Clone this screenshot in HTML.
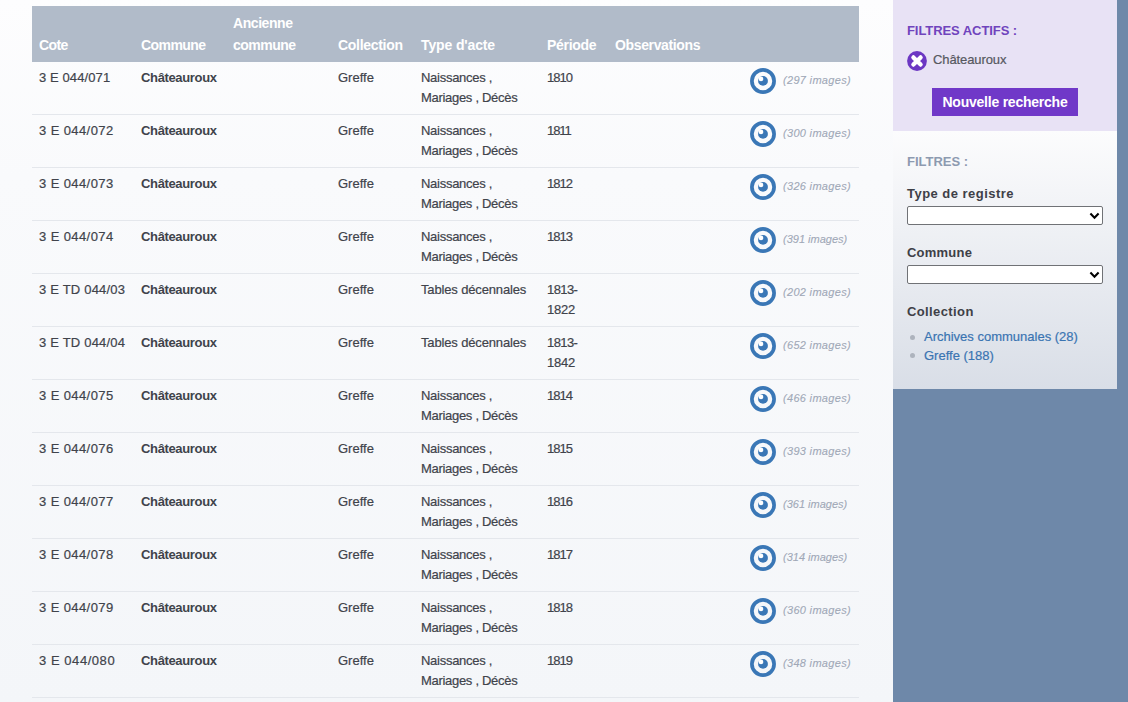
<!DOCTYPE html>
<html><head><meta charset="utf-8">
<style>
*{margin:0;padding:0;box-sizing:border-box}
html,body{width:1128px;height:702px;overflow:hidden}
body{position:relative;font-family:"Liberation Sans",sans-serif;font-size:13px;line-height:20px;color:#40434b;
background:linear-gradient(180deg,#fdfdfe 0%,#f9fafc 25%,#f4f6f9 100%);}
.t{position:absolute;white-space:nowrap;height:20px;-webkit-text-stroke:0.2px currentColor}
.b{font-weight:bold;-webkit-text-stroke:0}
.hd{position:absolute;left:32px;top:6px;width:827px;height:56px;background:#b1bbc9}
.h{color:#fff;font-weight:bold;font-size:14px;-webkit-text-stroke:0}
.ln{position:absolute;left:32px;width:827px;height:1px;background:#e4e7ec}
.eye{position:absolute}
.im{font-style:italic;font-size:11px;color:#a0a8b7;-webkit-text-stroke:0.1px currentColor}
.steel{position:absolute;left:893px;top:0;width:235px;height:702px;background:#6e88a9}
.act{position:absolute;left:893px;top:0;width:224px;height:131px;background:#e8e2f5}
.flt{position:absolute;left:893px;top:131px;width:224px;height:258px;background:linear-gradient(180deg,#fcfcfd 0%,#d9dee7 100%)}
.btn{position:absolute;left:932px;top:88px;width:146px;height:28px;background:#7038c8;color:#fff;font-weight:bold;font-size:14px;line-height:28px;text-align:center;letter-spacing:-0.23px}
.sel{position:absolute;left:907px;width:196px;height:19px;background:#fff;border:1px solid #707276;border-radius:2px}
.lk{color:#3a74b2}
.bul{position:absolute;width:5px;height:5px;border-radius:50%;background:#adb3bd}
</style></head><body>
<div class="hd"></div>
<div class="t h" style="left:39px;top:34.9px;letter-spacing:-0.6px">Cote</div>
<div class="t h" style="left:141px;top:34.9px;letter-spacing:-0.55px">Commune</div>
<div class="t h" style="left:233px;top:13.2px;letter-spacing:-0.43px">Ancienne</div>
<div class="t h" style="left:233px;top:34.9px;letter-spacing:-0.5px">commune</div>
<div class="t h" style="left:338px;top:34.9px;letter-spacing:-0.3px">Collection</div>
<div class="t h" style="left:421px;top:34.9px;letter-spacing:-0.13px">Type d'acte</div>
<div class="t h" style="left:547px;top:34.9px;letter-spacing:-0.3px">Période</div>
<div class="t h" style="left:615px;top:34.9px;letter-spacing:-0.36px">Observations</div>
<div class="t " style="left:39px;top:67.5px;letter-spacing:0.1px">3 E 044/071</div><div class="t b" style="left:141px;top:67.5px;letter-spacing:-0.35px">Châteauroux</div><div class="t " style="left:338px;top:67.5px">Greffe</div><div class="t " style="left:421px;top:67.5px;letter-spacing:-0.27px">Naissances ,</div><div class="t " style="left:421px;top:87.5px;letter-spacing:-0.3px">Mariages , Décès</div><div class="t " style="left:547px;top:67.5px;letter-spacing:-1px">1810</div><svg class="eye" style="left:750px;top:68px" width="26" height="26" viewBox="0 0 26 26"><circle cx="13" cy="13" r="11.1" fill="none" stroke="#3a77b6" stroke-width="3.7"/><circle cx="13" cy="12.9" r="4.9" fill="#3a77b6"/><circle cx="11" cy="10.9" r="2.3" fill="#fff"/></svg><div class="t im" style="left:783px;top:70.1px;letter-spacing:0.31px">(297 images)</div><div class="ln" style="top:114px"></div><div class="t " style="left:39px;top:120.5px;letter-spacing:0.4px">3 E 044/072</div><div class="t b" style="left:141px;top:120.5px;letter-spacing:-0.35px">Châteauroux</div><div class="t " style="left:338px;top:120.5px">Greffe</div><div class="t " style="left:421px;top:120.5px;letter-spacing:-0.27px">Naissances ,</div><div class="t " style="left:421px;top:140.5px;letter-spacing:-0.3px">Mariages , Décès</div><div class="t " style="left:547px;top:120.5px;letter-spacing:-1.1px">1811</div><svg class="eye" style="left:750px;top:121px" width="26" height="26" viewBox="0 0 26 26"><circle cx="13" cy="13" r="11.1" fill="none" stroke="#3a77b6" stroke-width="3.7"/><circle cx="13" cy="12.9" r="4.9" fill="#3a77b6"/><circle cx="11" cy="10.9" r="2.3" fill="#fff"/></svg><div class="t im" style="left:783px;top:123.1px;letter-spacing:0.31px">(300 images)</div><div class="ln" style="top:167px"></div><div class="t " style="left:39px;top:173.5px;letter-spacing:0.4px">3 E 044/073</div><div class="t b" style="left:141px;top:173.5px;letter-spacing:-0.35px">Châteauroux</div><div class="t " style="left:338px;top:173.5px">Greffe</div><div class="t " style="left:421px;top:173.5px;letter-spacing:-0.27px">Naissances ,</div><div class="t " style="left:421px;top:193.5px;letter-spacing:-0.3px">Mariages , Décès</div><div class="t " style="left:547px;top:173.5px;letter-spacing:-1px">1812</div><svg class="eye" style="left:750px;top:174px" width="26" height="26" viewBox="0 0 26 26"><circle cx="13" cy="13" r="11.1" fill="none" stroke="#3a77b6" stroke-width="3.7"/><circle cx="13" cy="12.9" r="4.9" fill="#3a77b6"/><circle cx="11" cy="10.9" r="2.3" fill="#fff"/></svg><div class="t im" style="left:783px;top:176.1px;letter-spacing:0.31px">(326 images)</div><div class="ln" style="top:220px"></div><div class="t " style="left:39px;top:226.5px;letter-spacing:0.4px">3 E 044/074</div><div class="t b" style="left:141px;top:226.5px;letter-spacing:-0.35px">Châteauroux</div><div class="t " style="left:338px;top:226.5px">Greffe</div><div class="t " style="left:421px;top:226.5px;letter-spacing:-0.27px">Naissances ,</div><div class="t " style="left:421px;top:246.5px;letter-spacing:-0.3px">Mariages , Décès</div><div class="t " style="left:547px;top:226.5px;letter-spacing:-1px">1813</div><svg class="eye" style="left:750px;top:227px" width="26" height="26" viewBox="0 0 26 26"><circle cx="13" cy="13" r="11.1" fill="none" stroke="#3a77b6" stroke-width="3.7"/><circle cx="13" cy="12.9" r="4.9" fill="#3a77b6"/><circle cx="11" cy="10.9" r="2.3" fill="#fff"/></svg><div class="t im" style="left:783px;top:229.1px">(391 images)</div><div class="ln" style="top:273px"></div><div class="t " style="left:39px;top:279.5px;letter-spacing:0.2px">3 E TD 044/03</div><div class="t b" style="left:141px;top:279.5px;letter-spacing:-0.35px">Châteauroux</div><div class="t " style="left:338px;top:279.5px">Greffe</div><div class="t " style="left:421px;top:279.5px;letter-spacing:-0.15px">Tables décennales</div><div class="t " style="left:547px;top:279.5px;letter-spacing:-0.6px">1813-</div><div class="t " style="left:547px;top:299.5px;letter-spacing:-0.2px">1822</div><svg class="eye" style="left:750px;top:280px" width="26" height="26" viewBox="0 0 26 26"><circle cx="13" cy="13" r="11.1" fill="none" stroke="#3a77b6" stroke-width="3.7"/><circle cx="13" cy="12.9" r="4.9" fill="#3a77b6"/><circle cx="11" cy="10.9" r="2.3" fill="#fff"/></svg><div class="t im" style="left:783px;top:282.1px;letter-spacing:0.31px">(202 images)</div><div class="ln" style="top:326px"></div><div class="t " style="left:39px;top:332.5px;letter-spacing:0.2px">3 E TD 044/04</div><div class="t b" style="left:141px;top:332.5px;letter-spacing:-0.35px">Châteauroux</div><div class="t " style="left:338px;top:332.5px">Greffe</div><div class="t " style="left:421px;top:332.5px;letter-spacing:-0.15px">Tables décennales</div><div class="t " style="left:547px;top:332.5px;letter-spacing:-0.6px">1813-</div><div class="t " style="left:547px;top:352.5px;letter-spacing:-0.2px">1842</div><svg class="eye" style="left:750px;top:333px" width="26" height="26" viewBox="0 0 26 26"><circle cx="13" cy="13" r="11.1" fill="none" stroke="#3a77b6" stroke-width="3.7"/><circle cx="13" cy="12.9" r="4.9" fill="#3a77b6"/><circle cx="11" cy="10.9" r="2.3" fill="#fff"/></svg><div class="t im" style="left:783px;top:335.1px;letter-spacing:0.31px">(652 images)</div><div class="ln" style="top:379px"></div><div class="t " style="left:39px;top:385.5px;letter-spacing:0.4px">3 E 044/075</div><div class="t b" style="left:141px;top:385.5px;letter-spacing:-0.35px">Châteauroux</div><div class="t " style="left:338px;top:385.5px">Greffe</div><div class="t " style="left:421px;top:385.5px;letter-spacing:-0.27px">Naissances ,</div><div class="t " style="left:421px;top:405.5px;letter-spacing:-0.3px">Mariages , Décès</div><div class="t " style="left:547px;top:385.5px;letter-spacing:-1px">1814</div><svg class="eye" style="left:750px;top:386px" width="26" height="26" viewBox="0 0 26 26"><circle cx="13" cy="13" r="11.1" fill="none" stroke="#3a77b6" stroke-width="3.7"/><circle cx="13" cy="12.9" r="4.9" fill="#3a77b6"/><circle cx="11" cy="10.9" r="2.3" fill="#fff"/></svg><div class="t im" style="left:783px;top:388.1px;letter-spacing:0.31px">(466 images)</div><div class="ln" style="top:432px"></div><div class="t " style="left:39px;top:438.5px;letter-spacing:0.4px">3 E 044/076</div><div class="t b" style="left:141px;top:438.5px;letter-spacing:-0.35px">Châteauroux</div><div class="t " style="left:338px;top:438.5px">Greffe</div><div class="t " style="left:421px;top:438.5px;letter-spacing:-0.27px">Naissances ,</div><div class="t " style="left:421px;top:458.5px;letter-spacing:-0.3px">Mariages , Décès</div><div class="t " style="left:547px;top:438.5px;letter-spacing:-1px">1815</div><svg class="eye" style="left:750px;top:439px" width="26" height="26" viewBox="0 0 26 26"><circle cx="13" cy="13" r="11.1" fill="none" stroke="#3a77b6" stroke-width="3.7"/><circle cx="13" cy="12.9" r="4.9" fill="#3a77b6"/><circle cx="11" cy="10.9" r="2.3" fill="#fff"/></svg><div class="t im" style="left:783px;top:441.1px;letter-spacing:0.31px">(393 images)</div><div class="ln" style="top:485px"></div><div class="t " style="left:39px;top:491.5px;letter-spacing:0.4px">3 E 044/077</div><div class="t b" style="left:141px;top:491.5px;letter-spacing:-0.35px">Châteauroux</div><div class="t " style="left:338px;top:491.5px">Greffe</div><div class="t " style="left:421px;top:491.5px;letter-spacing:-0.27px">Naissances ,</div><div class="t " style="left:421px;top:511.5px;letter-spacing:-0.3px">Mariages , Décès</div><div class="t " style="left:547px;top:491.5px;letter-spacing:-1px">1816</div><svg class="eye" style="left:750px;top:492px" width="26" height="26" viewBox="0 0 26 26"><circle cx="13" cy="13" r="11.1" fill="none" stroke="#3a77b6" stroke-width="3.7"/><circle cx="13" cy="12.9" r="4.9" fill="#3a77b6"/><circle cx="11" cy="10.9" r="2.3" fill="#fff"/></svg><div class="t im" style="left:783px;top:494.1px">(361 images)</div><div class="ln" style="top:538px"></div><div class="t " style="left:39px;top:544.5px;letter-spacing:0.4px">3 E 044/078</div><div class="t b" style="left:141px;top:544.5px;letter-spacing:-0.35px">Châteauroux</div><div class="t " style="left:338px;top:544.5px">Greffe</div><div class="t " style="left:421px;top:544.5px;letter-spacing:-0.27px">Naissances ,</div><div class="t " style="left:421px;top:564.5px;letter-spacing:-0.3px">Mariages , Décès</div><div class="t " style="left:547px;top:544.5px;letter-spacing:-1px">1817</div><svg class="eye" style="left:750px;top:545px" width="26" height="26" viewBox="0 0 26 26"><circle cx="13" cy="13" r="11.1" fill="none" stroke="#3a77b6" stroke-width="3.7"/><circle cx="13" cy="12.9" r="4.9" fill="#3a77b6"/><circle cx="11" cy="10.9" r="2.3" fill="#fff"/></svg><div class="t im" style="left:783px;top:547.1px">(314 images)</div><div class="ln" style="top:591px"></div><div class="t " style="left:39px;top:597.5px;letter-spacing:0.4px">3 E 044/079</div><div class="t b" style="left:141px;top:597.5px;letter-spacing:-0.35px">Châteauroux</div><div class="t " style="left:338px;top:597.5px">Greffe</div><div class="t " style="left:421px;top:597.5px;letter-spacing:-0.27px">Naissances ,</div><div class="t " style="left:421px;top:617.5px;letter-spacing:-0.3px">Mariages , Décès</div><div class="t " style="left:547px;top:597.5px;letter-spacing:-1px">1818</div><svg class="eye" style="left:750px;top:598px" width="26" height="26" viewBox="0 0 26 26"><circle cx="13" cy="13" r="11.1" fill="none" stroke="#3a77b6" stroke-width="3.7"/><circle cx="13" cy="12.9" r="4.9" fill="#3a77b6"/><circle cx="11" cy="10.9" r="2.3" fill="#fff"/></svg><div class="t im" style="left:783px;top:600.1px;letter-spacing:0.31px">(360 images)</div><div class="ln" style="top:644px"></div><div class="t " style="left:39px;top:650.5px;letter-spacing:0.55px">3 E 044/080</div><div class="t b" style="left:141px;top:650.5px;letter-spacing:-0.35px">Châteauroux</div><div class="t " style="left:338px;top:650.5px">Greffe</div><div class="t " style="left:421px;top:650.5px;letter-spacing:-0.27px">Naissances ,</div><div class="t " style="left:421px;top:670.5px;letter-spacing:-0.3px">Mariages , Décès</div><div class="t " style="left:547px;top:650.5px;letter-spacing:-1px">1819</div><svg class="eye" style="left:750px;top:651px" width="26" height="26" viewBox="0 0 26 26"><circle cx="13" cy="13" r="11.1" fill="none" stroke="#3a77b6" stroke-width="3.7"/><circle cx="13" cy="12.9" r="4.9" fill="#3a77b6"/><circle cx="11" cy="10.9" r="2.3" fill="#fff"/></svg><div class="t im" style="left:783px;top:653.1px;letter-spacing:0.31px">(348 images)</div><div class="ln" style="top:697px"></div>
<div class="steel"></div>
<div class="act"></div>
<div class="flt"></div>
<div class="t b" style="left:907px;top:20.799999999999997px;letter-spacing:-0.07px;color:#7044bd">FILTRES ACTIFS :</div>
<svg style="position:absolute;left:907px;top:51px" width="20" height="20" viewBox="0 0 20 20"><circle cx="10" cy="10" r="9.9" fill="#6c37c3"/><path d="M6.4 6.4L13.6 13.6M13.6 6.4L6.4 13.6" stroke="#fff" stroke-width="4.3" stroke-linecap="round"/></svg>
<div class="t " style="left:933px;top:50.0px;letter-spacing:-0.1px;color:#56585f">Châteauroux</div>
<div class="btn">Nouvelle recherche</div>
<div class="t b" style="left:907px;top:151.8px;color:#8d9ab0">FILTRES :</div>
<div class="t b" style="left:907px;top:183.8px;letter-spacing:0.47px;color:#3e4047">Type de registre</div>
<div class="sel" style="top:206px"><svg style="position:absolute;left:181px;top:5px" width="11" height="8" viewBox="0 0 11 8"><path d="M1.4 1.6L5.5 5.7L9.6 1.6" fill="none" stroke="#000" stroke-width="2.1"/></svg></div>
<div class="t b" style="left:907px;top:243.10000000000002px;letter-spacing:0.23px;color:#3e4047">Commune</div>
<div class="sel" style="top:265px"><svg style="position:absolute;left:181px;top:5px" width="11" height="8" viewBox="0 0 11 8"><path d="M1.4 1.6L5.5 5.7L9.6 1.6" fill="none" stroke="#000" stroke-width="2.1"/></svg></div>
<div class="t b" style="left:907px;top:302.0px;letter-spacing:0.39px;color:#3e4047">Collection</div>
<div class="bul" style="left:910px;top:335px"></div>
<div class="t lk" style="left:924px;top:327.1px">Archives communales (28)</div>
<div class="bul" style="left:910px;top:353px"></div>
<div class="t lk" style="left:924px;top:345.6px">Greffe (188)</div>
</body></html>
